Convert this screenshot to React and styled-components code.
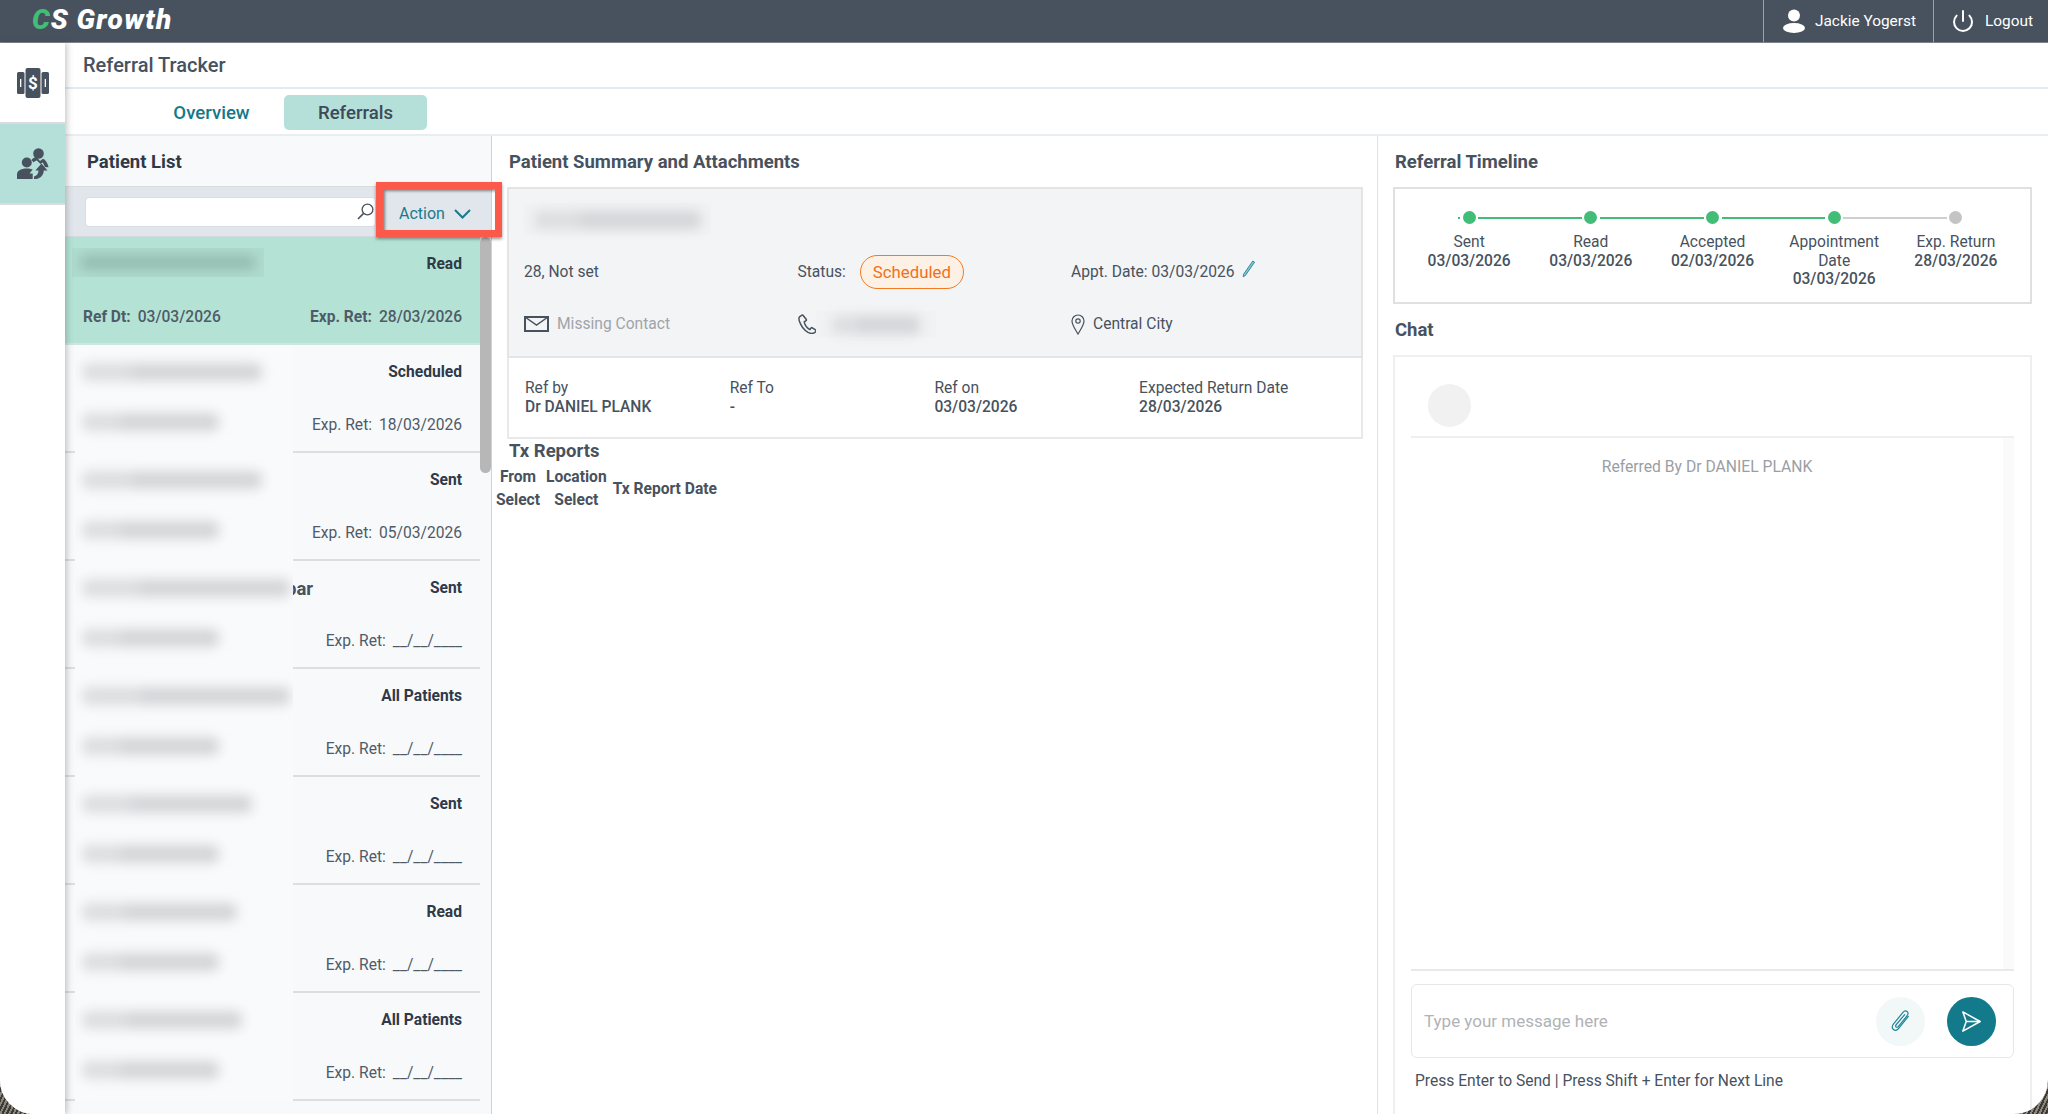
import styled, { createGlobalStyle } from 'styled-components';
import { Power } from 'lucide-react';

const GlobalStyle = createGlobalStyle`
  html, body {
    margin: 0;
    height: 100%;
    overflow: hidden;
    background: repeating-linear-gradient(115deg, #3c3a36 0 2px, #8d887d 2px 4px);
  }
  * { box-sizing: border-box; }
  #root { height: 100%; }
`;

const Shell = styled.div`
  height: 100vh;
  display: flex;
  flex-direction: column;
  overflow: hidden;
  background: #fff;
  border-radius: 0 0 34px 34px;
  font-family: Roboto, "Liberation Sans", sans-serif;
  font-size: 15.6px;
  color: #47525e;
`;

const TopBar = styled.header`
  flex: none;
  height: 43px;
  display: flex;
  align-items: stretch;
  background: #47525e;
  border-bottom: 1px solid #7b8590;
  color: #fff;
`;

const Logo = styled.div`
  padding: 3px 0 0 32px;
  font-size: 28px;
  line-height: 34px;
  font-weight: 900;
  font-style: italic;
  letter-spacing: 0.8px;
  margin-right: auto;
`;

const LogoAccent = styled.span`
  color: #41bd78;
`;

const LogoWord = styled.span`
  margin-left: 8px;
  letter-spacing: 1.4px;
`;

const TopAction = styled.div`
  width: ${p => p.$width}px;
  display: flex;
  align-items: center;
  gap: ${p => p.$gap}px;
  padding-left: ${p => p.$pad}px;
  border-left: 1px solid #9aa2ab;
  font-size: 15.4px;
`;

const Body = styled.div`
  flex: 1;
  min-height: 0;
  display: flex;
`;

const SideNav = styled.nav`
  flex: none;
  width: 65px;
  position: relative;
  z-index: 5;
  background: #fff;
  box-shadow: 2px 0 6px rgba(70, 70, 70, 0.3);
  padding-top: 1px;
`;

const SideItem = styled.div`
  height: ${p => (p.$active ? 83 : 78)}px;
  display: flex;
  align-items: center;
  justify-content: center;
  background: ${p => (p.$active ? '#b5dfd9' : '#fff')};
  border-top: ${p => (p.$active ? '2px solid #dcdcdc' : '0')};
  border-bottom: ${p => (p.$active ? '2px solid #dcdcdc' : '0')};
  color: #47525e;
`;

const Main = styled.main`
  flex: 1;
  min-width: 0;
  display: flex;
  flex-direction: column;
`;

const PageTitle = styled.div`
  flex: none;
  height: 46px;
  padding-left: 18px;
  display: flex;
  align-items: center;
  font-size: 20px;
  font-weight: 500;
  border-bottom: 2px solid #e2ebf2;
`;

const Tabs = styled.div`
  flex: none;
  height: 47px;
  padding: 6px 0 0 79px;
  display: flex;
  border-bottom: 2px solid #e8edf2;
`;

const Tab = styled.div`
  width: ${p => p.$width}px;
  height: 35px;
  display: flex;
  align-items: center;
  justify-content: center;
  border-radius: 5px;
  font-size: 18.6px;
  font-weight: 500;
  color: ${p => (p.$active ? '#3d4a57' : '#15798a')};
  background: ${p => (p.$active ? '#b5dfd9' : 'transparent')};
  margin-left: ${p => (p.$active ? 5 : 0)}px;
`;

const Columns = styled.div`
  flex: 1;
  min-height: 0;
  display: flex;
`;

const ListPanel = styled.section`
  flex: none;
  width: 427px;
  display: flex;
  flex-direction: column;
  background: #f8f9fb;
  border-right: 1px solid #cfd2d6;
`;

const ListHeader = styled.div`
  flex: none;
  height: 51px;
  padding: 2px 0 0 22px;
  display: flex;
  align-items: center;
  border-bottom: 1px solid #d8dcdf;
`;

const PanelTitle = styled.h2`
  margin: 0;
  font-size: 18.5px;
  line-height: 22px;
  font-weight: 700;
  color: ${p => (p.$dark ? '#2f3a46' : '#47525e')};
`;

const SearchRow = styled.div`
  flex: none;
  height: 50px;
  position: relative;
  display: flex;
  align-items: center;
  padding-left: 20px;
  background: #e0e6ec;
  border-bottom: 1px solid #d4d9de;
`;

const SearchBox = styled.div`
  width: 291px;
  height: 30px;
  display: flex;
  align-items: center;
  justify-content: flex-end;
  padding-right: 1px;
  background: #fff;
  border: 1px solid #d9dde1;
  border-radius: 4px;
  color: #47525e;
`;

const ActionButton = styled.div`
  margin-left: 23px;
  display: flex;
  align-items: center;
  gap: 9px;
  padding-top: 4px;
  font-size: 16px;
  color: #1a7a8c;
`;

const Highlight = styled.div`
  position: absolute;
  left: 311px;
  top: -5px;
  width: 126px;
  height: 55px;
  z-index: 4;
  border: 7px solid #fb5a4b;
  box-shadow: 0 2px 3px rgba(60, 60, 60, 0.55), inset 2px 2px 3px rgba(60, 60, 60, 0.6);
  pointer-events: none;
`;

const ListBody = styled.div`
  flex: 1;
  min-height: 0;
  position: relative;
  overflow: hidden;
  padding-right: 11px;
`;

const ScrollThumb = styled.div`
  position: absolute;
  top: 0;
  right: 0;
  width: 11px;
  height: 236px;
  border-radius: 6px;
  background: #b7b7b7;
`;

const Row = styled.article`
  position: relative;
  height: 108px;
  padding: 16px 18px 0 18px;
  display: grid;
  grid-template-rows: 21px 32px 21px;
  background: ${p => (p.$active ? '#b4e3d6' : 'transparent')};
  border-bottom: 2px solid ${p => (p.$active ? '#cfe6de' : '#dcdee1')};
`;

const RowLine = styled.div`
  display: flex;
  justify-content: space-between;
  align-items: center;
  grid-row: ${p => p.$row};
`;

const RowName = styled.span`
  margin-left: 203px;
  padding-top: 2px;
  font-size: 18.5px;
  font-weight: 700;
  color: #47525e;
`;

const Status = styled.span`
  margin-left: auto;
  font-size: 15.6px;
  font-weight: 700;
  color: #2f3a46;
`;

const Meta = styled.span`
  display: inline-flex;
  gap: 7px;
  margin-left: ${p => (p.$end ? 'auto' : 0)};
  color: #4f5b67;
  font-weight: ${p => (p.$strong ? 500 : 400)};
`;

const MetaLabel = styled.span`
  font-weight: ${p => (p.$strong ? 700 : 400)};
`;

const Redaction = styled.div`
  position: absolute;
  left: ${p => (p.$active ? 7 : 10)}px;
  top: ${p => (p.$active ? 11 : 0)}px;
  bottom: ${p => (p.$active ? 'auto' : '-2px')};
  width: ${p => (p.$active ? 192 : 218)}px;
  height: ${p => (p.$active ? '29px' : 'auto')};
  overflow: hidden;
  display: flex;
  flex-direction: column;
  gap: 32px;
  padding: ${p => (p.$active ? '7px 8px' : '18px 0 0 7px')};
  background: ${p => (p.$active ? '#afdccf' : '#f9fafb')};
`;

const BlurBar = styled.div`
  flex: none;
  width: ${p => p.$width}px;
  max-width: 100%;
  height: ${p => (p.$active ? 15 : 18)}px;
  border-radius: 6px;
  background: ${p =>
    p.$active ? '#94bdaf' : 'linear-gradient(90deg, #dcdde0 0 28%, #d3d5d8 28% 100%)'};
  filter: blur(6px);
`;

const Middle = styled.section`
  flex: none;
  width: 886px;
  padding: 15px 14px 0 15px;
  border-right: 1px solid #dfe2e5;
`;

const MiddleTitle = styled(PanelTitle)`
  margin: 0 0 14px 2px;
`;

const SummaryCard = styled.div`
  margin-top: 14px;
  background: #f3f4f6;
  border: 2px solid #e3e4e6;
  height: 171px;
  padding: 14px 15px 0;
`;

const SummaryName = styled.div`
  width: 187px;
  height: 32px;
  padding: 8px 10px;
  background: #f1f2f4;
`;

const SummaryGrid = styled.div`
  margin-top: 20px;
  display: grid;
  grid-template-columns: repeat(3, 273.5px);
  grid-auto-rows: 34px;
  row-gap: 18px;
`;

const SummaryCell = styled.div`
  display: flex;
  align-items: center;
  gap: ${p => p.$gap ?? 8}px;
  color: ${p => (p.$muted ? '#a0a4a8' : '#47525e')};
`;

const StatusPill = styled.span`
  margin-left: 6px;
  height: 34px;
  width: 104px;
  display: flex;
  align-items: center;
  justify-content: center;
  border: 1.5px solid #f27a22;
  border-radius: 17px;
  background: #fdf0e4;
  color: #f0701a;
  font-size: 16.8px;
`;

const PhoneBlur = styled.div`
  width: 120px;
  height: 26px;
  margin-left: -1px;
  padding: 5px 16px;
  background: #f1f2f4;
`;

const ReferralCard = styled.div`
  height: 81px;
  padding: 21px 16px 0;
  display: grid;
  grid-template-columns: repeat(4, 204.7px);
  align-content: start;
  border: 2px solid #e8e9eb;
  border-top: 0;
  line-height: 18.5px;
`;

const RefValue = styled.div`
  font-weight: 500;
`;

const TxTitle = styled(PanelTitle)`
  margin: 1px 0 0 2px;
`;

const TxTable = styled.table`
  margin: 4px 0 0 -11px;
  border-collapse: collapse;
  color: #47525e;
  font-size: 15.6px;
  font-weight: 700;
  line-height: 23px;
  th {
    padding: 0 6px 0 0;
    font-weight: 700;
    text-align: center;
    vertical-align: middle;
  }
`;

const Right = styled.section`
  flex: 1;
  min-width: 0;
  display: flex;
  flex-direction: column;
  padding: 15px 16px 0 15px;
`;

const RightTitle = styled(PanelTitle)`
  margin-left: 2px;
`;

const TimelineCard = styled.div`
  margin-top: 14px;
  flex: none;
  height: 117px;
  padding: 22px 0 0 0;
  display: grid;
  grid-template-columns: repeat(5, 121.7px);
  justify-content: center;
  border: 2px solid #dfe0e2;
`;

const Step = styled.div`
  position: relative;
  display: flex;
  flex-direction: column;
  align-items: center;
  text-align: center;
  line-height: 18.5px;
  color: #47525e;
`;

const Dot = styled.div`
  width: 13px;
  height: 13px;
  border-radius: 50%;
  margin-bottom: 9px;
  background: ${p => (p.$done ? '#41bd78' : '#c4c4c4')};
`;

const Connector = styled.div`
  position: absolute;
  top: 5.5px;
  left: calc(50% + 9px);
  width: calc(100% - 18px);
  height: 2px;
  background: ${p => (p.$done ? '#41bd78' : '#cfcfcf')};
`;

const LeadIn = styled.div`
  position: absolute;
  top: 5.5px;
  left: calc(50% - 11px);
  width: 2px;
  height: 2px;
  background: #41bd78;
`;

const StepDate = styled.div`
  font-weight: 500;
`;

const ChatTitle = styled(PanelTitle)`
  margin: 15px 0 14px 2px;
`;

const ChatCard = styled.div`
  flex: 1;
  min-height: 0;
  display: flex;
  flex-direction: column;
  padding: 0 16px;
  border: 2px solid #eeeff0;
  border-bottom: 0;
`;

const ChatHead = styled.div`
  flex: none;
  height: 81px;
  padding: 27px 0 0 17px;
  border-bottom: 2px solid #eeeff0;
`;

const Avatar = styled.div`
  width: 43px;
  height: 43px;
  border-radius: 50%;
  background: #f1f1f1;
`;

const ChatLog = styled.div`
  flex: 1;
  min-height: 0;
  display: flex;
  border-bottom: 2px solid #e8e9ea;
`;

const ChatMessages = styled.div`
  flex: 1;
  padding-top: 19px;
  text-align: center;
  color: #9a9ea3;
  font-size: 15.7px;
  line-height: 20px;
`;

const ChatTrack = styled.div`
  flex: none;
  width: 11px;
  background: #fafafa;
`;

const Composer = styled.div`
  flex: none;
  height: 74px;
  margin-top: 13px;
  display: flex;
  align-items: center;
  gap: 22px;
  padding: 0 17px 0 12px;
  border: 1.5px solid #e6e7e8;
  border-radius: 6px;
`;

const Placeholder = styled.div`
  flex: 1;
  font-size: 17px;
  color: #b0b3b6;
`;

const RoundButton = styled.div`
  width: 49px;
  height: 49px;
  border-radius: 50%;
  display: flex;
  align-items: center;
  justify-content: center;
  background: ${p => (p.$primary ? '#137a8b' : '#f2f8f8')};
  color: ${p => (p.$primary ? '#fff' : '#1f8496')};
`;

const Hint = styled.div`
  flex: none;
  height: 56px;
  padding: 14px 0 0 4px;
  line-height: 18px;
  color: #47525e;
`;

const patients = [
  { status: 'Scheduled', exp: '18/03/2026', name: 180, sub: 137 },
  { status: 'Sent', exp: '05/03/2026', name: 180, sub: 137 },
  { status: 'Sent', exp: '__/__/____', name: 208, sub: 137, tail: 'par' },
  { status: 'All Patients', exp: '__/__/____', name: 208, sub: 137 },
  { status: 'Sent', exp: '__/__/____', name: 170, sub: 137 },
  { status: 'Read', exp: '__/__/____', name: 155, sub: 137 },
  { status: 'All Patients', exp: '__/__/____', name: 160, sub: 137 },
];

const steps = [
  { label: ['Sent'], date: '03/03/2026', done: true, line: true, lead: true },
  { label: ['Read'], date: '03/03/2026', done: true, line: true },
  { label: ['Accepted'], date: '02/03/2026', done: true, line: true },
  { label: ['Appointment', 'Date'], date: '03/03/2026', done: true, line: false },
  { label: ['Exp. Return'], date: '28/03/2026', done: false, last: true },
];

const MoneyIcon = () => (
  <svg width="32" height="30" viewBox="0 0 32 30" fill="currentColor">
    <rect x="0" y="4" width="7.5" height="22" rx="1.5" />
    <rect x="24.5" y="4" width="7.5" height="22" rx="1.5" />
    <rect x="8.5" y="0" width="15" height="30" rx="2" />
    <rect x="3" y="11" width="1.3" height="8" fill="#fff" />
    <rect x="27.7" y="11" width="1.3" height="8" fill="#fff" />
    <text x="16" y="21" fontSize="17" fontWeight="700" fontFamily="Roboto, sans-serif" fill="#fff" textAnchor="middle">$</text>
  </svg>
);

const ReferIcon = () => (
  <svg width="32" height="32" viewBox="0 0 32 32" fill="currentColor">
    <circle cx="21.5" cy="5.5" r="5.3" />
    <circle cx="9.8" cy="14.5" r="5" />
    <path d="M0 31v-4.5C0 23 3.5 20.5 9.8 20.5c2.4 0 4.4.4 6 1.1L12.5 25.5h3.2V31z" />
    <path d="M14.5 12c1.2-1.5 3-2.7 5-2.9l3.5 3.8 3-2.2c2.5 1 4.6 3.9 5.6 8.6l-3.8-.4c-.6-2.2-1.4-3.6-2.3-4.4l-2 1.4-3.6-3.4c-1.3.2-2.6 1-3.3 2.1z" />
    <path d="M24.5 15.5l6 7h-3.7c-.3 4.6-3 8-7.8 8.5h-2v-2.5c2.8-.4 4.4-2.8 4.5-6h-3.2z" />
  </svg>
);

const UserIcon = () => (
  <svg width="24" height="24" viewBox="0 0 24 24" fill="#fff">
    <circle cx="12" cy="6.5" r="6" />
    <ellipse cx="12" cy="19" rx="11" ry="5" />
  </svg>
);

const SearchIcon = () => (
  <svg width="17" height="17" viewBox="0 0 17 17" fill="none" stroke="#47525e" strokeWidth="1.3">
    <circle cx="10.5" cy="6.5" r="5.4" />
    <path d="M6.6 10.4L1 16" strokeWidth="1.6" />
  </svg>
);

const Chevron = () => (
  <svg width="17" height="10" viewBox="0 0 17 10" fill="none" stroke="#1a7a8c" strokeWidth="2">
    <path d="M1 1l7.5 7.5L16 1" />
  </svg>
);

const MailIcon = () => (
  <svg width="25" height="16" viewBox="0 0 25 16" fill="none" stroke="#47525e" strokeWidth="2">
    <rect x="1" y="1" width="23" height="14" />
    <path d="M1 1l11.5 8L24 1" strokeWidth="1.5" />
  </svg>
);

const PhoneIcon = () => (
  <svg width="19" height="20" viewBox="0 0 19 20" fill="none" stroke="#47525e" strokeWidth="1.5" style={{ flex: 'none' }}>
    <path d="M4 1.2L1.8 2.6C.6 3.6.8 6.4 2.4 9.6c1.6 3.4 4.6 7 7.6 8.8 2.4 1.2 5 1.2 6.6.2l1.4-1.2c.3-.4.2-.9-.2-1.2l-3.4-2.4c-.4-.3-.9-.2-1.2.1l-1.4 1.6c-2.6-1.4-5-4.8-5.6-7.6l1.8-1.2c.4-.3.5-.8.3-1.2L5.2 1.5C4.9 1 4.4 1 4 1.2z" />
  </svg>
);

const PinIcon = () => (
  <svg width="14" height="21" viewBox="0 0 14 21" fill="none" stroke="#47525e" strokeWidth="1.2">
    <path d="M7 20C4 15 1 11 1 7a6 6 0 0 1 12 0c0 4-3 8-6 13z" />
    <circle cx="7" cy="7" r="2.2" />
  </svg>
);

const PencilIcon = () => (
  <svg width="14" height="18" viewBox="0 0 14 18" fill="#8cc4cd" stroke="#1f8496" strokeWidth="0.9" style={{ marginTop: -6 }}>
    <path d="M10.8 1L12.6 2.2 3.4 15.4 1.2 16.8 1.6 14.2z" />
  </svg>
);

const ClipIcon = () => (
  <svg width="22" height="24" viewBox="0 0 24 26" fill="none" stroke="currentColor" strokeWidth="1.3" strokeLinecap="round">
    <path d="M20 8L9.5 21c-1.8 2.2-4.2 2.6-5.8 1.3-1.7-1.3-1.7-3.8 0-6L14.2 3.5c1.3-1.6 3-2 4.4-.9 1.4 1.1 1.4 3 .1 4.6L9 19c-.7.9-1.7 1.1-2.4.5-.7-.6-.6-1.6.1-2.4L16 6" />
  </svg>
);

const SendIcon = () => (
  <svg width="23" height="23" viewBox="0 0 22 24" fill="none" stroke="#fff" strokeWidth="1.6" strokeLinejoin="round">
    <path d="M2 2l18 10L2 22l3.5-10z" />
    <path d="M5.5 12H20" />
  </svg>
);

function PatientRow({ patient }) {
  return (
    <Row>
      <RowLine $row={1}>
        {patient.tail && <RowName>{patient.tail}</RowName>}
        <Status>{patient.status}</Status>
      </RowLine>
      <RowLine $row={3}>
        <Meta $end>
          <span>Exp. Ret:</span>
          <span>{patient.exp}</span>
        </Meta>
      </RowLine>
      <Redaction>
        <BlurBar $width={patient.name} />
        <BlurBar $width={patient.sub} />
      </Redaction>
    </Row>
  );
}

export default function App() {
  return (
    <Shell>
      <GlobalStyle />
      <TopBar>
        <Logo>
          <LogoAccent>C</LogoAccent>S<LogoWord>Growth</LogoWord>
        </Logo>
        <TopAction $width={170} $gap={9} $pad={18}>
          <UserIcon />
          Jackie Yogerst
        </TopAction>
        <TopAction $width={115} $gap={10} $pad={17}>
          <Power size={24} strokeWidth={2} />
          Logout
        </TopAction>
      </TopBar>
      <Body>
        <SideNav>
          <SideItem>
            <MoneyIcon />
          </SideItem>
          <SideItem $active>
            <ReferIcon />
          </SideItem>
        </SideNav>
        <Main>
          <PageTitle>Referral Tracker</PageTitle>
          <Tabs>
            <Tab $width={135}>Overview</Tab>
            <Tab $width={143} $active>Referrals</Tab>
          </Tabs>
          <Columns>
            <ListPanel>
              <ListHeader>
                <PanelTitle $dark>Patient List</PanelTitle>
              </ListHeader>
              <SearchRow>
                <SearchBox>
                  <SearchIcon />
                </SearchBox>
                <ActionButton>
                  Action
                  <Chevron />
                </ActionButton>
                <Highlight />
              </SearchRow>
              <ListBody>
                <Row $active>
                  <RowLine $row={1}>
                    <Status>Read</Status>
                  </RowLine>
                  <RowLine $row={3}>
                    <Meta $strong>
                      <MetaLabel $strong>Ref Dt:</MetaLabel>
                      <span>03/03/2026</span>
                    </Meta>
                    <Meta $end $strong>
                      <MetaLabel $strong>Exp. Ret:</MetaLabel>
                      <span>28/03/2026</span>
                    </Meta>
                  </RowLine>
                  <Redaction $active>
                    <BlurBar $active $width={176} />
                  </Redaction>
                </Row>
                {patients.map((patient, i) => (
                  <PatientRow key={i} patient={patient} />
                ))}
                <ScrollThumb />
              </ListBody>
            </ListPanel>
            <Middle>
              <MiddleTitle>Patient Summary and Attachments</MiddleTitle>
              <SummaryCard>
                <SummaryName>
                  <BlurBar $width={170} />
                </SummaryName>
                <SummaryGrid>
                  <SummaryCell>28, Not set</SummaryCell>
                  <SummaryCell>
                    Status:
                    <StatusPill>Scheduled</StatusPill>
                  </SummaryCell>
                  <SummaryCell>
                    Appt. Date: 03/03/2026
                    <PencilIcon />
                  </SummaryCell>
                  <SummaryCell $muted>
                    <MailIcon />
                    Missing Contact
                  </SummaryCell>
                  <SummaryCell $gap={0}>
                    <PhoneIcon />
                    <PhoneBlur>
                      <BlurBar $width={92} />
                    </PhoneBlur>
                  </SummaryCell>
                  <SummaryCell>
                    <PinIcon />
                    Central City
                  </SummaryCell>
                </SummaryGrid>
              </SummaryCard>
              <ReferralCard>
                <div>
                  Ref by
                  <RefValue>Dr DANIEL PLANK</RefValue>
                </div>
                <div>
                  Ref To
                  <RefValue>-</RefValue>
                </div>
                <div>
                  Ref on
                  <RefValue>03/03/2026</RefValue>
                </div>
                <div>
                  Expected Return Date
                  <RefValue>28/03/2026</RefValue>
                </div>
              </ReferralCard>
              <TxTitle>Tx Reports</TxTitle>
              <TxTable>
                <thead>
                  <tr>
                    <th>From</th>
                    <th>Location</th>
                    <th rowSpan={2}>Tx Report Date</th>
                  </tr>
                  <tr>
                    <th>Select</th>
                    <th>Select</th>
                  </tr>
                </thead>
              </TxTable>
            </Middle>
            <Right>
              <RightTitle>Referral Timeline</RightTitle>
              <TimelineCard>
                {steps.map(step => (
                  <Step key={step.label[0]}>
                    {step.lead && <LeadIn />}
                    <Dot $done={step.done} />
                    {!step.last && <Connector $done={step.line} />}
                    {step.label.map(line => (
                      <div key={line}>{line}</div>
                    ))}
                    <StepDate>{step.date}</StepDate>
                  </Step>
                ))}
              </TimelineCard>
              <ChatTitle>Chat</ChatTitle>
              <ChatCard>
                <ChatHead>
                  <Avatar />
                </ChatHead>
                <ChatLog>
                  <ChatMessages>Referred By Dr DANIEL PLANK</ChatMessages>
                  <ChatTrack />
                </ChatLog>
                <Composer>
                  <Placeholder>Type your message here</Placeholder>
                  <RoundButton>
                    <ClipIcon />
                  </RoundButton>
                  <RoundButton $primary>
                    <SendIcon />
                  </RoundButton>
                </Composer>
                <Hint>Press Enter to Send | Press Shift + Enter for Next Line</Hint>
              </ChatCard>
            </Right>
          </Columns>
        </Main>
      </Body>
    </Shell>
  );
}
